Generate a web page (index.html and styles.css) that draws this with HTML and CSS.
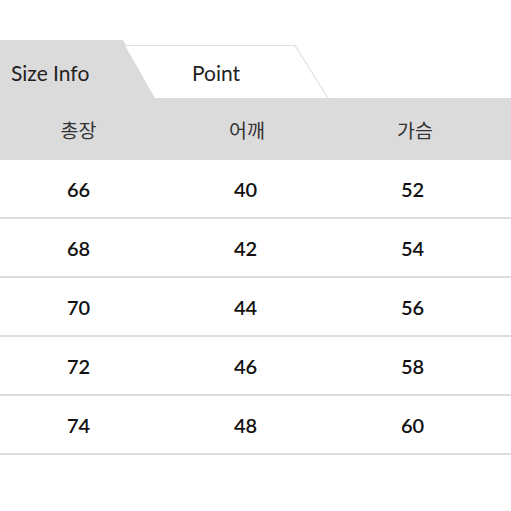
FILE: index.html
```html
<!DOCTYPE html>
<html lang="ko">
<head>
<meta charset="utf-8">
<title>Size Info</title>
<link rel="stylesheet" href="styles.css">
</head>
<body>
<div class="page">
  <div class="tabs">
    <div class="tab tab-active">Size Info</div>
    <div class="tab tab-point">
      <svg class="tab-shape" width="204" height="53" viewBox="0 0 204 53" aria-hidden="true">
        <polygon points="0,0.5 170,0.5 203,53 30,53" fill="#ffffff"/>
        <polyline points="0,0.5 170,0.5 203,53" fill="none" stroke="#e6dfe1" stroke-width="1.2"/>
      </svg>
      <span class="tab-label">Point</span>
    </div>
  </div>
  <div class="table">
    <div class="row head">
      <div class="cell">총장</div>
      <div class="cell">어깨</div>
      <div class="cell">가슴</div>
    </div>
    <div class="row">
      <div class="cell">66</div><div class="cell">40</div><div class="cell">52</div>
    </div>
    <div class="row">
      <div class="cell">68</div><div class="cell">42</div><div class="cell">54</div>
    </div>
    <div class="row">
      <div class="cell">70</div><div class="cell">44</div><div class="cell">56</div>
    </div>
    <div class="row">
      <div class="cell">72</div><div class="cell">46</div><div class="cell">58</div>
    </div>
    <div class="row">
      <div class="cell">74</div><div class="cell">48</div><div class="cell">60</div>
    </div>
  </div>
</div>
</body>
</html>
```
FILE: styles.css
```css
html, body {
  margin: 0;
  padding: 0;
  background: #ffffff;
}
body {
  font-family: Lato, "Noto Sans CJK KR", sans-serif;
  color: #222;
  width: 511px;
  overflow: hidden;
}
.page {
  padding-top: 40px;
}
.tabs {
  display: flex;
  align-items: flex-end;
  height: 58px;
}
.tab {
  font-size: 21px;
  line-height: 1;
  color: #222;
}
.tab-active {
  width: 155px;
  height: 58px;
  box-sizing: border-box;
  background: #dcdbdc;
  clip-path: polygon(0 0, 123px 0, 155px 58px, 0 58px);
  padding: 22px 0 0 11px;
}
.tab-point {
  position: relative;
  width: 204px;
  height: 53px;
  margin-left: -30px;
  display: flex;
  justify-content: center;
  box-sizing: border-box;
  padding: 17px 22px 0 0;
}
.tab-shape {
  position: absolute;
  left: 0;
  top: 0;
}
.tab-label {
  position: relative;
}
.table {
  display: flex;
  flex-direction: column;
}
.row {
  display: grid;
  grid-template-columns: repeat(3, 167px);
  margin-left: -5px;
  height: 57px;
  align-items: center;
  border-bottom: 2px solid #dfdcdd;
  font-size: 20px;
  font-weight: 600;
  color: #111;
}
.row.head {
  height: 62px;
  border-bottom: none;
  background: #dcdbdc;
  margin-left: 0;
  grid-template-columns: 157px 180px 1fr;
  font-family: "Noto Sans CJK KR", sans-serif;
  font-size: 19.5px;
  font-weight: 400;
  color: #333;
}
.row.head .cell:nth-child(3) {
  padding-right: 18px;
}
.cell {
  text-align: center;
}
```
